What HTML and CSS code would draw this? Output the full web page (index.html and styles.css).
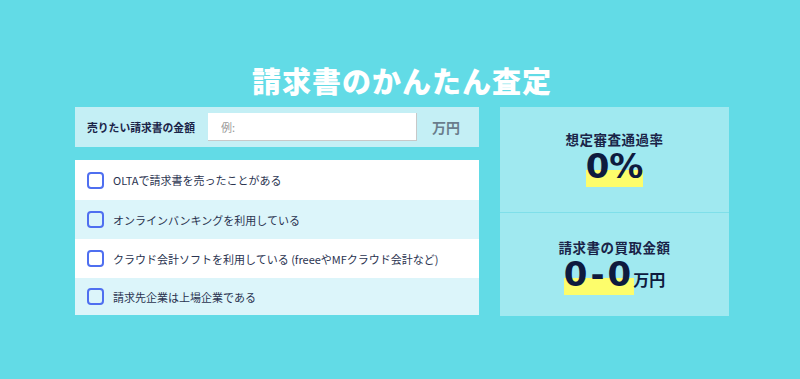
FILE: index.html
```html
<!DOCTYPE html>
<html lang="ja">
<head>
    <meta charset="UTF-8">
    <meta name="viewport" content="width=device-width, initial-scale=1.0">
    <title>請求書のかんたん査定</title>
    <link rel="stylesheet" href="styles.css">
</head>
<body>

    <section class="simulator">
        <h1 class="sim-title">請求書のかんたん査定</h1>

        <div class="sim-body">
            <div class="sim-form">
                <div class="amount-row">
                    <label class="amount-label" for="amount">売りたい請求書の金額</label>
                    <input id="amount" class="amount-input" type="text" placeholder="例:">
                    <span class="amount-unit">万円</span>
                </div>

                <ul class="check-list">
                    <li class="check-item"><span class="check-box"></span>OLTAで請求書を売ったことがある</li>
                    <li class="check-item"><span class="check-box"></span>オンラインバンキングを利用している</li>
                    <li class="check-item"><span class="check-box"></span>クラウド会計ソフトを利用している (freeeやMFクラウド会計など)</li>
                    <li class="check-item"><span class="check-box"></span>請求先企業は上場企業である</li>
                </ul>
            </div>

            <div class="sim-result">
                <div class="result-card rate">
                    <div class="result-label">想定審査通過率</div>
                    <div class="result-value"><span class="mark">0%</span></div>
                </div>
                <div class="result-card">
                    <div class="result-label">請求書の買取金額</div>
                    <div class="result-value"><span class="mark spaced">0-0</span><span class="result-unit">万円</span></div>
                </div>
            </div>
        </div>
    </section>

</body>
</html>
```

FILE: styles.css
```css
* {
    padding: 0;
    margin: 0;
    box-sizing: border-box;
}

body {
    background: #62dbe6;
    font-family: 'Noto Sans CJK JP', 'Noto Sans', sans-serif;
    color: #1a2448;
    height: 379px;
    overflow: hidden;
}

.simulator {
    width: 658px;
    margin: 0 auto;
    padding: 61px 0 0 4px;
}

.sim-title {
    color: white;
    text-align: center;
    font-size: 29px;
    font-weight: 900;
    line-height: 38px;
    letter-spacing: 1px;
    margin-bottom: 8px;
}

.sim-body {
    display: flex;
    gap: 21px;
}

.sim-form {
    width: 404px;
}

.amount-row {
    display: flex;
    align-items: center;
    height: 40px;
    background: #c4eff5;
    padding: 0 12px;
    margin-bottom: 13px;
}

.amount-label {
    font-size: 10.8px;
    font-weight: bold;
    width: 121px;
    color: #1a2448;
}

.amount-input {
    width: 209px;
    height: 28px;
    border: none;
    border-right: 1px solid #c8c8c8;
    border-bottom: 1px solid #c8c8c8;
    padding: 0 13px;
    font-family: inherit;
    font-size: 11px;
    outline: none;
}

.amount-input::placeholder {
    color: #999;
}

.amount-unit {
    margin-left: 15px;
    font-size: 14px;
    font-weight: bold;
    color: #6a7d8c;
}

.check-list {
    list-style: none;
    background: white;
}

.check-item {
    display: flex;
    align-items: center;
    height: 39px;
    padding: 0 12px;
    font-size: 11px;
    color: #2a3350;
}

.check-item:first-child {
    height: 40px;
}

.check-item:nth-child(even) {
    background: #dcf5fa;
}

.check-item:last-child {
    height: 37px;
}

.check-box {
    width: 17px;
    height: 17px;
    border: 2px solid #4f6ff0;
    border-radius: 4px;
    margin-right: 9px;
    flex-shrink: 0;
}

.sim-result {
    width: 229px;
    display: flex;
    flex-direction: column;
    gap: 1px;
    background: #7fdfe9;
    height: 209px;
}

.result-card {
    flex: 1;
    background: #a0e9f0;
    display: flex;
    flex-direction: column;
    align-items: center;
    justify-content: center;
    padding-top: 2px;
}

.result-card.rate {
    padding: 0 0 4px;
}

.result-label {
    font-size: 13.5px;
    font-weight: bold;
    color: #1a2448;
    letter-spacing: 0.5px;
}

.result-value {
    display: flex;
    align-items: baseline;
    margin-top: 2px;
}

.mark {
    display: inline-block;
    font-family: 'DejaVu Sans', sans-serif;
    font-weight: bold;
    font-size: 34px;
    line-height: 30px;
    padding-bottom: 6px;
    color: #0e1a3e;
    background: linear-gradient(#fdfd6b, #fdfd6b) no-repeat bottom / 100% 17px;
}

.mark.spaced {
    letter-spacing: 3px;
    margin-right: -1px;
}

.result-unit {
    font-size: 16px;
    font-weight: bold;
    color: #0e1a3e;
}
```
